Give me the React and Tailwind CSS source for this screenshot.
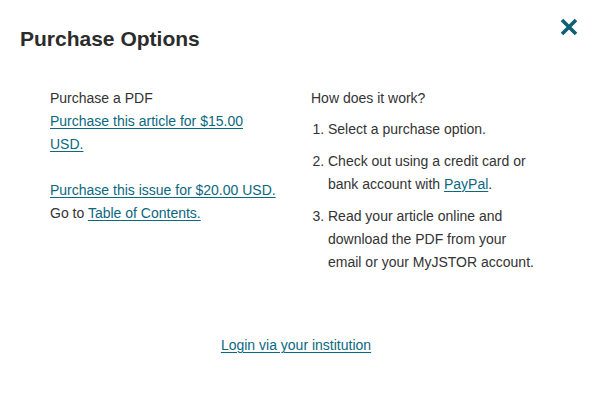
export default function App() {
  const link = 'text-[#0b6880] underline underline-offset-2 decoration-1'

  return (
    <div className="w-[592px] h-[402px] bg-white text-[#333] font-['Liberation_Sans',Arial,sans-serif]">
      <div className="flex items-start justify-between pl-5 pr-[14px] pt-[27px]">
        <h1 className="text-[21px] leading-[24px] font-bold text-[#2b2b2b]">Purchase Options</h1>
        <button aria-label="Close" className="-mt-[9px]">
          <svg width="18" height="18" viewBox="0 0 18 18" className="block">
            <path d="M2 2 L16 16 M16 2 L2 16" stroke="#0f5f74" strokeWidth="3.6" strokeLinecap="butt" />
          </svg>
        </button>
      </div>

      <div className="flex pl-[50px] mt-[36px] text-[14px] leading-[23px]">
        <div className="w-[227px]">
          <p>Purchase a PDF</p>
          <a href="#" className={link}>Purchase this article for $15.00 USD.</a>
          <div className="h-[23px]" />
          <a href="#" className={`${link} whitespace-nowrap`}>Purchase this issue for $20.00 USD.</a>
          <p>
            Go to <a href="#" className={link}>Table of Contents.</a>
          </p>
        </div>

        <div className="ml-[34px] w-[232px]">
          <p>How does it work?</p>
          <ol className="list-decimal pl-[17px] mt-[8px] space-y-[9px]">
            <li>Select a purchase option.</li>
            <li>
              Check out using a credit card or bank account with <a href="#" className={link}>PayPal</a>.
            </li>
            <li>Read your article online and download the PDF from your email or your MyJSTOR account.</li>
          </ol>
        </div>
      </div>

      <div className="flex justify-center mt-[60px] text-[14px] leading-[23px]">
        <a href="#" className={link}>Login via your institution</a>
      </div>
    </div>
  )
}
